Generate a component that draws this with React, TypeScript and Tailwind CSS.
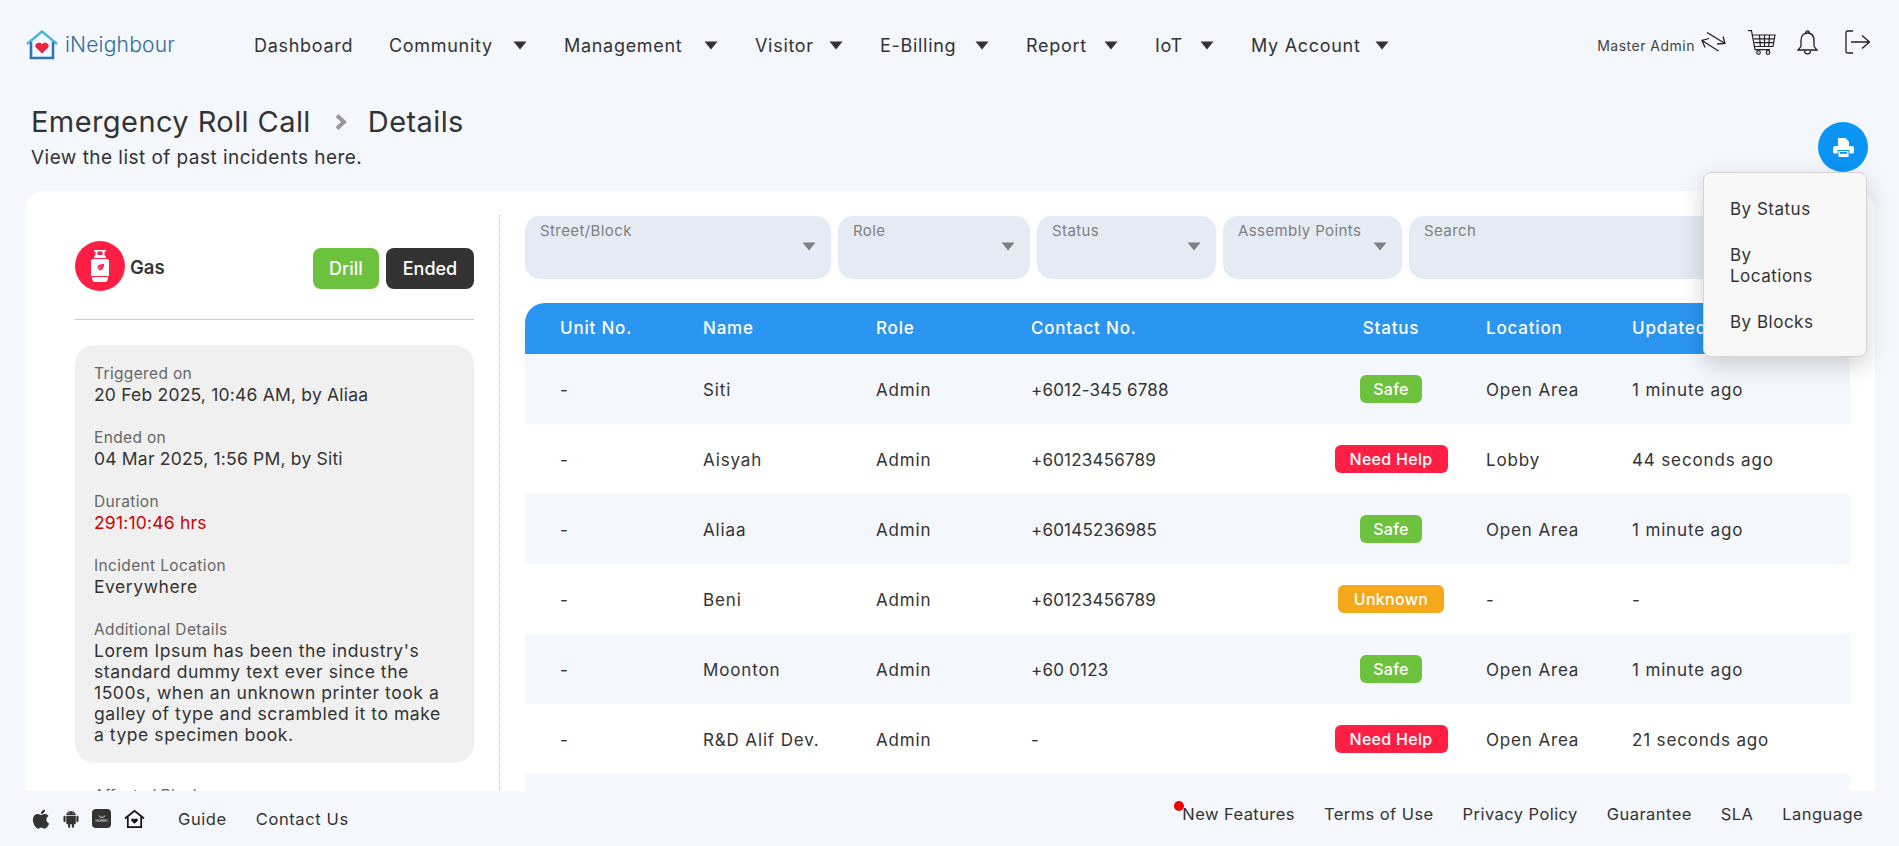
import { FaApple } from 'react-icons/fa';
import { AiFillAndroid } from 'react-icons/ai';

const font = 'font-["Inter",sans-serif]';

const navItems = [
  { label: 'Dashboard', width: 'w-[135px]', caret: false },
  { label: 'Community', width: 'w-[175px]', caret: true },
  { label: 'Management', width: 'w-[191px]', caret: true },
  { label: 'Visitor', width: 'w-[125px]', caret: true },
  { label: 'E-Billing', width: 'w-[146px]', caret: true },
  { label: 'Report', width: 'w-[129px]', caret: true },
  { label: 'IoT', width: 'w-[96px]', caret: true },
  { label: 'My Account', width: 'w-[168px]', caret: true },
];

const filters = [
  { label: 'Street/Block', width: 'w-[306px]' },
  { label: 'Role', width: 'w-[192px]' },
  { label: 'Status', width: 'w-[179px]' },
  { label: 'Assembly Points', width: 'w-[179px]' },
];

const rows = [
  { unit: '-', name: 'Siti', role: 'Admin', contact: '+6012-345 6788', status: 'Safe', location: 'Open Area', updated: '1 minute ago' },
  { unit: '-', name: 'Aisyah', role: 'Admin', contact: '+60123456789', status: 'Need Help', location: 'Lobby', updated: '44 seconds ago' },
  { unit: '-', name: 'Aliaa', role: 'Admin', contact: '+60145236985', status: 'Safe', location: 'Open Area', updated: '1 minute ago' },
  { unit: '-', name: 'Beni', role: 'Admin', contact: '+60123456789', status: 'Unknown', location: '-', updated: '-' },
  { unit: '-', name: 'Moonton', role: 'Admin', contact: '+60 0123', status: 'Safe', location: 'Open Area', updated: '1 minute ago' },
  { unit: '-', name: 'R&D Alif Dev.', role: 'Admin', contact: '-', status: 'Need Help', location: 'Open Area', updated: '21 seconds ago' },
];

const details = [
  { label: 'Triggered on', value: '20 Feb 2025, 10:46 AM, by Aliaa' },
  { label: 'Ended on', value: '04 Mar 2025, 1:56 PM, by Siti' },
  { label: 'Duration', value: '291:10:46 hrs', red: true },
  { label: 'Incident Location', value: 'Everywhere', wide: true },
  {
    label: 'Additional Details',
    value: "Lorem Ipsum has been the industry's standard dummy text ever since the 1500s, when an unknown printer took a galley of type and scrambled it to make a type specimen book.",
    wide: true,
  },
];

function Caret({ className }: { className: string }) {
  return (
    <svg viewBox="0 0 14 9" className={className} fill="currentColor">
      <path d="M0.5 0.5h13L7 8.5z" />
    </svg>
  );
}

function StatusBadge({ status }: { status: string }) {
  const base = 'inline-flex h-[28px] items-center justify-center rounded-md text-[16px] font-medium tracking-[0.3px] text-white';
  if (status === 'Safe') return <span className={`${base} w-[62px] bg-[#6cc13d]`}>Safe</span>;
  if (status === 'Need Help') return <span className={`${base} w-[113px] bg-[#ff1f44]`}>Need Help</span>;
  return <span className={`${base} w-[106px] bg-[#f5a81c]`}>Unknown</span>;
}

export default function App() {
  return (
    <div className={`${font} flex h-screen flex-col overflow-hidden bg-[#f4f7fd] text-[#333]`}>
      <nav className="flex h-[90px] shrink-0 items-center pl-[26px] pr-[29px]">
        <div className="flex w-[228px] shrink-0 items-center gap-[7px]">
          <svg viewBox="0 0 32 30" className="h-[30px] w-[32px]" fill="none">
            <path d="M1 14L16 1.5L31 14" stroke="#4cb4d8" strokeWidth="2.4" strokeLinejoin="round" />
            <path d="M5 12v16h22V12" stroke="#2f73b5" strokeWidth="2.6" />
            <path d="M16 23.5l-6-5.8c-2.6-3.2 2.8-7.2 6-3.4c3.2-3.800 8.600.2 6 3.4z" fill="#e8263f" />
          </svg>
          <span className="text-[21px] font-light tracking-[0.2px] text-[#2d6ca8]">iNeighbour</span>
        </div>
        <div className="flex items-center">
          {navItems.map(item => (
            <div key={item.label} className={`flex items-center whitespace-nowrap text-[18px] font-normal tracking-[0.7px] text-[#333] ${item.width}`}>
              <span>{item.label}</span>
              {item.caret && <Caret className={`ml-auto h-[9px] w-[14px] text-[#333] ${item.label === 'My Account' ? 'mr-[30px]' : 'mr-[37px]'}`} />}
            </div>
          ))}
        </div>
        <div className="ml-auto flex items-center">
          <span className="whitespace-nowrap text-[14px] tracking-[0.5px] text-[#444]">Master Admin</span>
          <div className="mb-[6px] ml-[6px] flex items-center">
            <svg viewBox="0 0 26 19.500" className="h-[19.500px] w-[26px]" fill="none" stroke="#222" strokeWidth="1.300">
              <path d="M6 0.500L24 11.500M16 12L24 11.500L22 4.500" />
              <path d="M17.500 19L1 8.500M8 6.500L1 8.500L4 15.500" />
            </svg>
            <svg viewBox="0 0 28 25" className="ml-[21px] h-[25px] w-[28px]" fill="none" stroke="#222" strokeWidth="1.200">
              <path d="M0 0.600h3.500l3.500 19h15" />
              <path d="M5 5h22l-2 11.500H7" />
              <path d="M5.700 8.800h20.600M6.400 12.600h19.200M11.500 5l.8 11.500M16.500 5v11.500M21.500 5l-.8 11.500" />
              <circle cx="10.500" cy="22.500" r="1.800" />
              <circle cx="20" cy="22.500" r="1.800" />
            </svg>
            <svg viewBox="0 0 21 25" className="ml-[21px] h-[25px] w-[21px]" fill="none" stroke="#222" strokeWidth="1.300">
              <path d="M10.500 3c-4.500 0-6.500 3.500-6.500 7.500v5c0 2-2 3-3 4.500h19c-1-1.500-3-2.500-3-4.500v-5C17 6.500 15 3 10.500 3z" />
              <path d="M8.800 3c0-2.800 3.400-2.800 3.400 0M7.500 20.500c0 4.500 6 4.500 6 0" />
            </svg>
            <svg viewBox="0 0 25 24" className="ml-[27px] h-[24px] w-[25px]" fill="none" stroke="#222" strokeWidth="1.300">
              <path d="M8 1H2.500A1.500 1.500 0 0 0 1 2.500v19A1.500 1.500 0 0 0 2.500 23H8" />
              <path d="M6 12h18.500M17 5.500l7.500 6.500L17 18.500" />
            </svg>
          </div>
        </div>
      </nav>

      <div className="relative h-[101px] shrink-0 pl-[31px] pt-[14px]">
        <div className="flex items-center text-[29px] leading-[36px] tracking-[0.42px] text-[#333]">
          <span>Emergency Roll Call</span>
          <svg viewBox="0 0 12 16" className="ml-[24px] mr-[21px] h-[16px] w-[12px]" fill="none" stroke="#999" strokeWidth="4">
            <path d="M2 1.500L9 8l-7 6.500" />
          </svg>
          <span>Details</span>
        </div>
        <p className="mt-[5px] text-[19px] leading-[26px] tracking-[0.46px] text-[#333]">View the list of past incidents here.</p>
        <button className="absolute right-[31px] top-[32px] flex h-[50px] w-[50px] items-center justify-center rounded-full bg-[#0a95f5]">
          <svg viewBox="0 0 21 19" className="h-[19px] w-[21px]" fill="white">
            <path d="M5 0h7.500L16 3.500V8H5z" />
            <path fillRule="evenodd" d="M2 8h17a2 2 0 0 1 2 2v4a1.500 1.500 0 0 1-1.500 1.500H16.500V12h-12v3.500H1.500A1.500 1.500 0 0 1 0 14v-4a2 2 0 0 1 2-2z" />
            <path d="M5.500 13h10v6h-10z" />
            <path d="M7 14h7v1.800H7z" fill="#0a95f5" />
          </svg>
        </button>
        <div className="absolute right-[32px] top-[82px] z-10 h-[185px] w-[164px] rounded-lg border border-[#d4d4d4] bg-[#f8f8f8] pl-[26px] pt-[26px] text-[17px] leading-[21px] tracking-[0.5px] text-[#333] shadow-[0_8px_24px_rgba(0,0,0,0.18)]">
          <p>By Status</p>
          <p className="mt-[25px]">By<br />Locations</p>
          <p className="mt-[25px]">By Blocks</p>
        </div>
      </div>

      <main className="ml-[25px] mr-[24px] flex min-h-0 flex-1 overflow-hidden rounded-t-[20px] bg-white">
        <aside className="flex w-[475px] shrink-0 flex-col pl-[50px]">
          <div className="mt-[24px] border-r border-dotted border-[#bbb] pr-[25px] pt-[26px]">
            <div className="flex h-[79px] items-start border-b border-[#ccc]">
              <div className="flex items-center">
                <div className="flex h-[50px] w-[50px] items-center justify-center rounded-full bg-[#ff1f44]">
                  <svg viewBox="0 0 18 32" className="h-[32px] w-[18px]" fill="white">
                    <path fillRule="evenodd" d="M3 0h12v1.600h-1.500V5h-2V1.600h-5V5h-2V1.600H3z" />
                    <path d="M3 8c0-2 1-3 3-3h6c2 0 3 1 3 3z" />
                    <path d="M2 9h14a2 2 0 0 1 2 2v15H0V11a2 2 0 0 1 2-2z" />
                    <path d="M1 27h16c0 3-1 5-3 5H4c-2 0-3-2-3-5z" />
                    <path d="M13 14c-3.500 0-6.500.8-6.500 4 0 .8.200 1.300.6 1.800.5-1.800 1.800-3 3.400-3.700-1.200 1-2.200 2.200-2.700 3.900 3.500 1.200 5.200-2.500 5.200-6z" fill="#ff1f44" />
                  </svg>
                </div>
                <span className="ml-[5px] mt-[4px] text-[18.500px] font-semibold text-[#333]">Gas</span>
              </div>
              <div className="ml-auto mt-[7px] flex gap-[7px]">
                <span className="flex h-[41px] w-[66px] items-center justify-center rounded-lg bg-[#6cc13d] text-[18px] font-medium text-white">Drill</span>
                <span className="flex h-[41px] w-[88px] items-center justify-center rounded-lg bg-[#333] text-[18px] font-medium text-white">Ended</span>
              </div>
            </div>
            <div className="mt-[25px] flex h-[418px] flex-col gap-[23px] rounded-[20px] bg-[#f0f0f0] py-[19px] pl-[19px] pr-[19px]">
              {details.map(d => (
                <div key={d.label}>
                  <p className="text-[15.500px] leading-[20px] tracking-[0.35px] text-[#666]">{d.label}</p>
                  <p className={`text-[17.500px] leading-[21px] ${d.wide ? 'tracking-[0.55px]' : 'tracking-[0.2px]'} ${d.red ? 'text-[#d40000]' : 'text-[#333]'}`}>{d.value}</p>
                </div>
              ))}
            </div>
            <p className="mt-[23px] pl-[19px] text-[15.500px] leading-[20px] text-[#666]">Affected Blocks</p>
          </div>
        </aside>

        <section className="min-w-0 flex-1 pl-[25px] pr-[25px] pt-[25px]">
          <div className="flex gap-[7px]">
            {filters.map(f => (
              <div key={f.label} className={`relative h-[63px] shrink-0 rounded-[15px] bg-[#e5ebf5] pl-[15px] pt-[5px] text-[15px] leading-[20px] tracking-[0.4px] text-[#808080] ${f.width}`}>
                {f.label}
                <Caret className="absolute right-[15px] top-[26px] h-[9px] w-[14px] text-[#808080]" />
              </div>
            ))}
            <div className="h-[63px] min-w-0 flex-1 rounded-[15px] bg-[#e5ebf5] pl-[15px] pt-[5px] text-[15px] leading-[20px] tracking-[0.4px] text-[#808080]">Search</div>
          </div>

          <table className="mt-[24px] w-full table-fixed border-collapse text-[17px] text-[#333]">
            <colgroup>
              <col className="w-[178px]" />
              <col className="w-[173px]" />
              <col className="w-[155px]" />
              <col className="w-[279px]" />
              <col className="w-[176px]" />
              <col className="w-[146px]" />
              <col />
            </colgroup>
            <thead>
              <tr className="h-[51px] bg-[#2b96f1] text-left text-[17px] tracking-[0.8px] text-white">
                <th className="rounded-tl-[20px] pl-[35px] font-medium">Unit No.</th>
                <th className="font-medium">Name</th>
                <th className="font-medium">Role</th>
                <th className="font-medium">Contact No.</th>
                <th className="pr-[14px] text-center font-medium">Status</th>
                <th className="font-medium">Location</th>
                <th className="font-medium">Updated</th>
              </tr>
            </thead>
            <tbody>
              {rows.map((r, i) => (
                <tr key={r.name} className={`h-[70px] tracking-[0.85px] ${i % 2 === 0 ? 'bg-[#f4f7fd]' : 'bg-white'}`}>
                  <td className="pl-[35px] pt-[4px]">{r.unit}</td>
                  <td className="pt-[4px]">{r.name}</td>
                  <td className="pt-[4px]">{r.role}</td>
                  <td className="pt-[4px] tracking-[0.2px]">{r.contact}</td>
                  <td className="pr-[14px] text-center"><StatusBadge status={r.status} /></td>
                  <td className="pt-[4px]">{r.location}</td>
                  <td className="pt-[4px]">{r.updated}</td>
                </tr>
              ))}
              <tr className="h-[70px] bg-[#f4f7fd]"><td colSpan={7} /></tr>
            </tbody>
          </table>
        </section>
      </main>

      <footer className="flex h-[55px] shrink-0 items-center pl-[32px] pr-[36px] text-[16.500px] text-[#333]">
        <FaApple className="h-[22px] w-[18px] text-[#333]" />
        <AiFillAndroid className="ml-[11px] h-[22px] w-[20px] text-[#333]" />
        <div className="ml-[11px] flex h-[19px] w-[19px] flex-col items-center justify-center rounded-[4px] bg-[#333]">
          <svg viewBox="0 0 8 3" className="h-[3px] w-[8px]" fill="none" stroke="white" strokeWidth="0.800">
            <path d="M1 0.500c.5 2.500 5.500 2.500 6 0" />
          </svg>
          <span className="mt-[1px] text-[3px] leading-[4px] tracking-normal text-white">HUAWEI</span>
        </div>
        <svg viewBox="0 0 22 20" className="ml-[13px] h-[20px] w-[21px]" fill="none" stroke="#111" strokeWidth="1.800">
          <path d="M1 9.500L11 1.500l10 8" />
          <path d="M4 8v10.500h14V8" />
          <path d="M11 15l-3.200-3c-1.400-1.700 1.600-3.700 3.200-1.700c1.600-2 4.600 0 3.200 1.700z" fill="#111" stroke="none" />
        </svg>
        <span className="ml-[33px] mt-[1px] tracking-[0.6px]">Guide</span>
        <span className="ml-[29px] mt-[1px] tracking-[0.6px]">Contact Us</span>
        <div className="relative mb-[8px] ml-auto flex items-center gap-[29px] tracking-[0.43px]">
          <span className="absolute left-[-8px] top-[-1px] h-[10px] w-[10px] rounded-full bg-[#f00000]" />
          <span>New Features</span>
          <span>Terms of Use</span>
          <span>Privacy Policy</span>
          <span>Guarantee</span>
          <span>SLA</span>
          <span>Language</span>
        </div>
      </footer>
    </div>
  );
}
